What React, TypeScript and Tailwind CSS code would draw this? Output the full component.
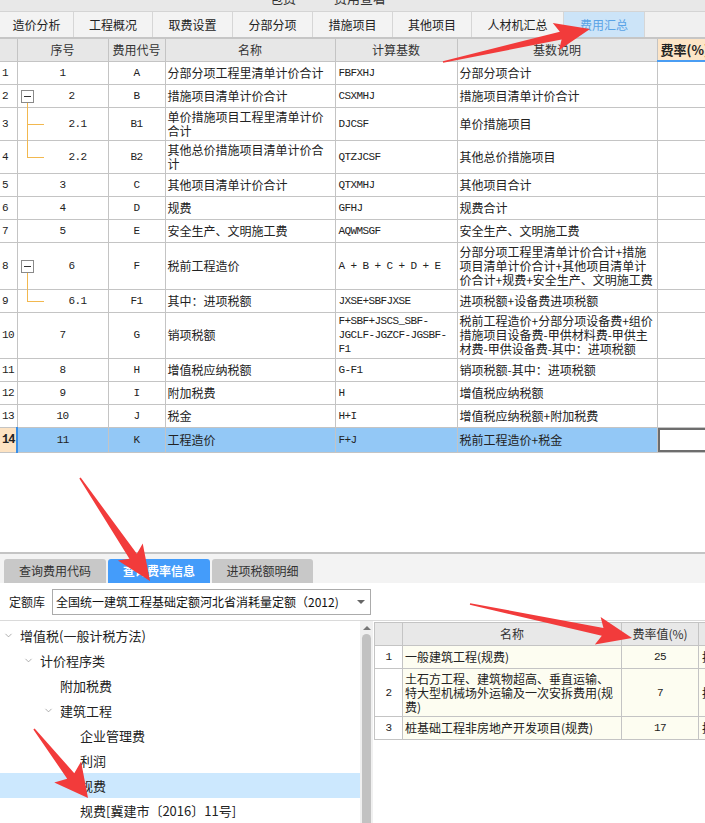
import { ChevronDown } from "lucide-react";

const cjk = "font-['Noto_Sans_CJK_SC',sans-serif]";
const mono = "font-['Liberation_Mono','Noto_Sans_CJK_SC',monospace] text-[11px] tracking-[-0.6px]";
const cell = "border border-[#c4c4c4] p-0 align-middle";

type Row = {
  n: number;
  seq: string;
  code: string;
  name: string;
  base: string;
  desc: string;
  h: number;
  tree?: "parent" | "mid" | "last";
  sel?: boolean;
};

const rows: Row[] = [
  { n: 1, seq: "1", code: "A", name: "分部分项工程里清单计价合计", base: "FBFXHJ", desc: "分部分项合计", h: 23 },
  { n: 2, seq: "2", code: "B", name: "措施项目清单计价合计", base: "CSXMHJ", desc: "措施项目清单计价合计", h: 23, tree: "parent" },
  { n: 3, seq: "2.1", code: "B1", name: "单价措施项目工程里清单计价\n合计", base: "DJCSF", desc: "单价措施项目", h: 33, tree: "mid" },
  { n: 4, seq: "2.2", code: "B2", name: "其他总价措施项目清单计价合\n计", base: "QTZJCSF", desc: "其他总价措施项目", h: 33, tree: "last" },
  { n: 5, seq: "3", code: "C", name: "其他项目清单计价合计", base: "QTXMHJ", desc: "其他项目合计", h: 23 },
  { n: 6, seq: "4", code: "D", name: "规费", base: "GFHJ", desc: "规费合计", h: 23 },
  { n: 7, seq: "5", code: "E", name: "安全生产、文明施工费", base: "AQWMSGF", desc: "安全生产、文明施工费", h: 23 },
  {
    n: 8,
    seq: "6",
    code: "F",
    name: "税前工程造价",
    base: "A + B + C + D + E",
    desc: "分部分项工程里清单计价合计+措施\n项目清单计价合计+其他项目清单计\n价合计+规费+安全生产、文明施工费",
    h: 47,
    tree: "parent",
  },
  { n: 9, seq: "6.1", code: "F1", name: "其中：进项税额", base: "JXSE+SBFJXSE", desc: "进项税额+设备费进项税额", h: 23, tree: "last" },
  {
    n: 10,
    seq: "7",
    code: "G",
    name: "销项税额",
    base: "F+SBF+JSCS_SBF-\nJGCLF-JGZCF-JGSBF-\nF1",
    desc: "税前工程造价+分部分项设备费+组价\n措施项目设备费-甲供材料费-甲供主\n材费-甲供设备费-其中：进项税额",
    h: 46,
  },
  { n: 11, seq: "8", code: "H", name: "增值税应纳税额", base: "G-F1", desc: "销项税额-其中：进项税额", h: 23 },
  { n: 12, seq: "9", code: "I", name: "附加税费", base: "H", desc: "增值税应纳税额", h: 23 },
  { n: 13, seq: "10", code: "J", name: "税金", base: "H+I", desc: "增值税应纳税额+附加税费", h: 23 },
  { n: 14, seq: "11", code: "K", name: "工程造价", base: "F+J", desc: "税前工程造价+税金", h: 24, sel: true },
];

const topTabs = [
  { label: "造价分析", w: "w-[74px]" },
  { label: "工程概况", w: "w-[79px]" },
  { label: "取费设置", w: "w-[80px]" },
  { label: "分部分项", w: "w-[80px]" },
  { label: "措施项目", w: "w-[80px]" },
  { label: "其他项目", w: "w-[79px]" },
  { label: "人材机汇总", w: "w-[92px]" },
  { label: "费用汇总", w: "w-[81px]", active: true },
];

const tree = [
  { label: "增值税(一般计税方法)", indent: "pl-0", open: true },
  { label: "计价程序类", indent: "pl-[20px]", open: true },
  { label: "附加税费", indent: "pl-[40px]" },
  { label: "建筑工程", indent: "pl-[40px]", open: true },
  { label: "企业管理费", indent: "pl-[60px]" },
  { label: "利润", indent: "pl-[60px]" },
  { label: "规费", indent: "pl-[60px]", sel: true },
  { label: "规费[冀建市〔2016〕11号]", indent: "pl-[60px]" },
];

const rates = [
  { n: 1, name: "一般建筑工程(规费)", v: "25", h: "h-[23px]" },
  { n: 2, name: "土石方工程、建筑物超高、垂直运输、\n特大型机械场外运输及一次安拆费用(规\n费)", v: "7", h: "h-[48px]" },
  { n: 3, name: "桩基础工程非房地产开发项目(规费)", v: "17", h: "h-[23px]" },
];

function TreeMark({ kind }: { kind: "parent" | "mid" | "last" }) {
  if (kind === "parent") {
    return (
      <>
        <span className="absolute left-[3px] top-[calc(50%-6px)] w-[13px] h-[13px] border border-[#8a8a8a] bg-white flex items-center justify-center">
          <span className="block w-[7px] h-px bg-[#333]" />
        </span>
        <span className="absolute left-[9px] top-[calc(50%+7px)] bottom-[-1px] w-px bg-[#f2b84f]" />
      </>
    );
  }
  return (
    <>
      <span
        className={
          kind === "mid"
            ? "absolute left-[9px] top-[-1px] bottom-[-1px] w-px bg-[#f2b84f]"
            : "absolute left-[9px] top-[-1px] h-[calc(50%+1px)] w-px bg-[#f2b84f]"
        }
      />
      <span className="absolute left-[9px] top-1/2 w-[17px] h-px bg-[#f2b84f]" />
    </>
  );
}

function Arrow({ t, p, hw = 30, hl = 30, ws = 9 }: { t: number[]; p: number[]; hw?: number; hl?: number; ws?: number }) {
  const dx = p[0] - t[0];
  const dy = p[1] - t[1];
  const len = Math.hypot(dx, dy);
  const ux = dx / len;
  const uy = dy / len;
  const nx = -uy;
  const ny = ux;
  const bx = p[0] - ux * hl;
  const by = p[1] - uy * hl;
  const pts = [
    [t[0] + nx * 0.8, t[1] + ny * 0.8],
    [bx + (nx * ws) / 2, by + (ny * ws) / 2],
    [bx - ux * 5 + (nx * hw) / 2, by - uy * 5 + (ny * hw) / 2],
    p,
    [bx - ux * 5 - (nx * hw) / 2, by - uy * 5 - (ny * hw) / 2],
    [bx - (nx * ws) / 2, by - (ny * ws) / 2],
    [t[0] - nx * 0.8, t[1] - ny * 0.8],
  ];
  return <polygon points={pts.map((q) => q.join(",")).join(" ")} fill="#f23b3b" />;
}

export default function App() {
  return (
    <div className={`relative w-[705px] h-[823px] overflow-hidden bg-white flex flex-col text-[#222] ${cjk}`}>
      {/* cut-off toolbar strip */}
      <div className="h-[11px] bg-[#e8e8e8] overflow-hidden flex text-[13px] leading-[13px] text-[#333]">
        <span className="ml-[270px] -mt-[9px]">包费</span>
        <span className="ml-[38px] -mt-[9px]">费用查看</span>
      </div>

      {/* top tabs */}
      <div className="h-[26px] flex bg-[#f0f0f0] border-t border-[#d4d4d4]">
        {topTabs.map((t) => (
          <div
            key={t.label}
            className={`${t.w} flex items-center justify-center text-[12px] border-r border-[#d6d6d6] ${
              t.active ? "bg-[#cce4f8] text-[#5aa3e6]" : "bg-[#f3f3f3] text-[#222]"
            }`}
          >
            {t.label}
          </div>
        ))}
      </div>
      <div className="h-[2px] bg-[#c6c6c6]" />

      {/* fee summary table */}
      <div className="overflow-hidden">
        <table className="table-fixed border-collapse w-[760px] text-[12px] leading-[14px]">
          <colgroup>
            <col className="w-[17px]" />
            <col className="w-[91px]" />
            <col className="w-[57px]" />
            <col className="w-[170px]" />
            <col className="w-[122px]" />
            <col className="w-[200px]" />
            <col className="w-[103px]" />
          </colgroup>
          <thead>
            <tr className="h-[22px] bg-[#e7e7e7] text-[12px] text-[#333]">
              <th className={`${cell} border-t-0 border-l-0 font-normal`} />
              <th className={`${cell} border-t-0 font-normal`}>序号</th>
              <th className={`${cell} border-t-0 font-normal`}>费用代号</th>
              <th className={`${cell} border-t-0 font-normal`}>名称</th>
              <th className={`${cell} border-t-0 font-normal`}>计算基数</th>
              <th className={`${cell} border-t-0 font-normal`}>基数说明</th>
              <th className={`${cell} border-t-0 border-b-2 border-b-[#4a9df3] bg-[#fde5c7] font-bold text-[13px] text-left pl-[3px] text-[#222] whitespace-nowrap`}>
                费率(%)
              </th>
            </tr>
          </thead>
          <tbody>
            {rows.map((r) => (
              <tr key={r.n} style={{ height: r.h }} className={r.sel ? "bg-[#93c8f6]" : "bg-white"}>
                <td className={`${cell} border-l-0 ${mono} pl-[2px] ${r.sel ? "bg-[#fde3c3] font-bold text-[12px] tracking-[-1px]" : "bg-white"}`}>
                  {r.n}
                </td>
                <td className={`${cell} relative ${mono} ${r.sel ? "border-l-2 border-l-[#3a8ee6]" : ""}`}>
                  {r.tree ? (
                    <>
                      <TreeMark kind={r.tree} />
                      <span className="block pl-[51px]">{r.seq}</span>
                    </>
                  ) : (
                    <span className="block text-center">{r.seq}</span>
                  )}
                </td>
                <td className={`${cell} ${mono} text-center`}>{r.code}</td>
                <td className={`${cell} pl-[2px] whitespace-pre`}>{r.name}</td>
                <td className={`${cell} ${mono} pl-[3px] whitespace-pre`}>{r.base}</td>
                <td className={`${cell} pl-[2px] whitespace-pre`}>{r.desc}</td>
                <td className={`${cell} ${r.sel ? "bg-white" : ""}`}>
                  {r.sel && <div className="h-[24px] border-2 border-[#6d6d6d] bg-white" />}
                </td>
              </tr>
            ))}
          </tbody>
        </table>
      </div>

      <div className="flex-1 bg-white" />

      {/* bottom panel */}
      <div className="h-[271px] flex flex-col">
        <div className="h-[2px] bg-[#c4c4c4]" />
        <div className="h-[29px] bg-[#f3f3f3] flex items-end gap-[2px] pl-[4px]">
          <div className="w-[102px] h-[24px] rounded-t-[3px] bg-[#c8c8c8] flex items-center justify-center text-[12px] text-[#333]">
            查询费用代码
          </div>
          <div className="w-[102px] h-[24px] rounded-t-[3px] bg-[#449cfa] flex items-center justify-center text-[12px] font-bold text-white">
            查询费率信息
          </div>
          <div className="w-[101px] h-[24px] rounded-t-[3px] bg-[#c8c8c8] flex items-center justify-center text-[12px] text-[#333]">
            进项税额明细
          </div>
        </div>

        <div className="h-[38px] flex items-center bg-white border-b border-[#dadada]">
          <span className="pl-[9px] w-[52px] text-[12px] text-[#222]">定额库</span>
          <div className="w-[319px] h-[26px] border border-[#ababab] bg-white flex items-center pl-[3px] pr-[5px] text-[12px] text-[#111]">
            <span className="flex-1 whitespace-nowrap">全国统一建筑工程基础定额河北省消耗量定额（2012)</span>
            <span className="w-0 h-0 border-l-[4px] border-r-[4px] border-t-[4px] border-l-transparent border-r-transparent border-t-[#666]" />
          </div>
        </div>

        <div className="flex-1 flex min-h-0">
          {/* tree */}
          <div className="w-[360px] pt-[2px] text-[13px]">
            {tree.map((n) => (
              <div key={n.label} className={`h-[25px] flex items-center ${n.indent} ${n.sel ? "bg-[#cce8fe]" : ""}`}>
                <span className="w-[20px] flex items-center pl-[3px]">
                  {n.open && <ChevronDown size={11} strokeWidth={1.5} className="text-[#8a8a8a]" />}
                </span>
                <span className="whitespace-nowrap">{n.label}</span>
              </div>
            ))}
          </div>

          {/* scrollbar */}
          <div className="w-[13px] bg-[#f0f0f0] flex flex-col items-center pt-[5px]">
            <span className="w-0 h-0 border-l-[4px] border-r-[4px] border-b-[4px] border-l-transparent border-r-transparent border-b-[#777]" />
            <span className="mt-[4px] w-[9px] flex-1 rounded-t-[5px] bg-[#c2c2c2]" />
          </div>

          {/* rate table */}
          <div className="flex-1 pt-[1px] pl-[1px] overflow-hidden">
            <table className="table-fixed border-collapse w-[390px] text-[12px] leading-[14px]">
              <colgroup>
                <col className="w-[28px]" />
                <col className="w-[219px]" />
                <col className="w-[77px]" />
                <col className="w-[66px]" />
              </colgroup>
              <thead>
                <tr className="h-[23px] bg-[#e8e8e8] text-[12px] text-[#333]">
                  <th className={`${cell} font-normal`} />
                  <th className={`${cell} font-normal`}>名称</th>
                  <th className={`${cell} font-normal`}>费率值(%)</th>
                  <th className={`${cell} font-normal`} />
                </tr>
              </thead>
              <tbody>
                {rates.map((r) => (
                  <tr key={r.n} className={r.h}>
                    <td className={`${cell} bg-white text-center ${mono}`}>{r.n}</td>
                    <td className={`${cell} bg-[#fdfdf1] pl-[2px] whitespace-pre`}>{r.name}</td>
                    <td className={`${cell} bg-[#fdfdf1] text-center ${mono}`}>{r.v}</td>
                    <td className={`${cell} bg-[#fdfdf1] pl-[3px]`}>按</td>
                  </tr>
                ))}
              </tbody>
            </table>
          </div>
        </div>
      </div>

      {/* annotation arrows */}
      <svg className="absolute inset-0 pointer-events-none" width="705" height="823">
        <Arrow t={[443, 62]} p={[590, 29]} hw={28} hl={30} ws={8} />
        <Arrow t={[80, 478]} p={[150, 581]} hw={30} hl={30} ws={9} />
        <Arrow t={[470, 604]} p={[632, 638]} hw={28} hl={30} ws={8} />
        <Arrow t={[34, 729]} p={[88, 798]} hw={34} hl={28} ws={9} />
      </svg>
    </div>
  );
}
